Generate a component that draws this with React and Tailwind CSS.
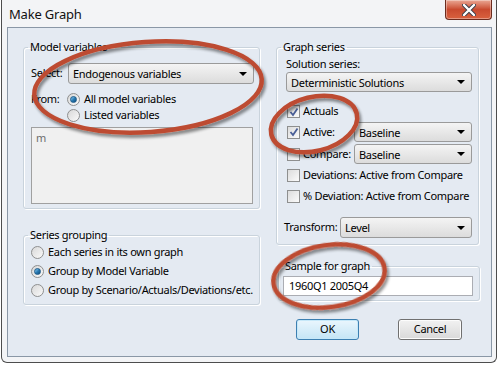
import React from "react";

const font = { fontFamily: '"Noto Sans", "Open Sans", sans-serif' };

const Arrow = () => (
  <svg width="8" height="4" viewBox="0 0 8 4" className="shrink-0">
    <path d="M0 0 L8 0 L4 4 Z" fill="#000" />
  </svg>
);

const Dropdown = ({ value, className }) => (
  <div
    className={
      "flex items-center justify-between h-[20px] rounded-[3px] border border-[#9a9a9a] bg-gradient-to-b from-[#f4f4f4] to-[#dcdcdc] pl-[4px] pr-[6px] leading-none " +
      className
    }
  >
    <span>{value}</span>
    <Arrow />
  </div>
);

const Check = ({ checked }) => (
  <div className="w-[13px] h-[13px] shrink-0 border border-[#8e8f8f] bg-gradient-to-br from-[#dcdcdc] to-[#fbfbfb] flex items-center justify-center">
    {checked && (
      <svg width="10" height="10" viewBox="0 0 10 10">
        <path d="M1.5 5 L4 8 L8.5 1.5" fill="none" stroke="#4a5f97" strokeWidth="1.8" />
      </svg>
    )}
  </div>
);

const Radio = ({ checked }) => (
  <div className="w-[13px] h-[13px] shrink-0 rounded-full border border-[#8e8f8f] bg-gradient-to-br from-[#d8d8d8] to-[#fafafa] flex items-center justify-center">
    {checked && (
      <div className="w-[7px] h-[7px] rounded-full bg-gradient-to-br from-[#8fd3f8] via-[#2a7cb4] to-[#0d4b7c] border border-[#1b5a8a]" />
    )}
  </div>
);

// group box, legend sits on the top border
const Group = ({ title, className, children }) => (
  <fieldset className={"border border-[#c9d3dc] rounded-[3px] p-0 m-0 shadow-[inset_1px_1px_0_#fff,1px_1px_0_#fff] " + className}>
    <legend className="ml-[4px] px-[2px] leading-[16px]">{title}</legend>
    {children}
  </fieldset>
);

export default function App() {
  return (
    <div
      className="relative w-[498px] h-[365px] bg-white overflow-hidden text-black text-[11px] tracking-[-0.3px] whitespace-nowrap"
      style={font}
    >
      <div className="ml-[1px] w-[496px] h-[363px] rounded-b-[6px] border border-t-0 border-[#4d4d4d] bg-[#f3f4f6] flex flex-col">
        {/* title bar */}
        <div className="h-[27px] flex items-start justify-between">
          <div className="pl-[7px] pt-[5px] text-[13px] leading-[18px] tracking-[-0.2px] text-[#111]">Make Graph</div>
          <div className="mr-[4px] w-[47px] h-[20px] rounded-b-[4px] border border-t-0 border-[#6b2c1f] bg-gradient-to-b from-[#e9a794] via-[#c94a2f] to-[#d9613f] flex items-center justify-center shadow-[inset_0_0_0_1px_rgba(255,255,255,0.35)]">
            <svg width="14" height="12" viewBox="0 0 14 12">
              <path d="M2 1 L12 11 M12 1 L2 11" stroke="#3a3f4a" strokeWidth="4.2" strokeLinecap="round" />
              <path d="M2 1 L12 11 M12 1 L2 11" stroke="#fff" strokeWidth="2.4" strokeLinecap="round" />
            </svg>
          </div>
        </div>

        {/* client area */}
        <div className="ml-[5px] w-[485px] h-[330px] border border-[#8a97a6] bg-[#e4eaf2] flex pl-[15px] pt-[11px]">
          {/* left column */}
          <div className="w-[237px] flex flex-col">
            <Group title="Model variables">
              <div className="pl-[7px] pb-[4px]">
                <div className="mt-[8px] flex items-center">
                  <span className="w-[37px]">Select:</span>
                  <Dropdown value="Endogenous variables" className="w-[186px] h-[21px]" />
                </div>
                <div className="mt-[7px] flex">
                  <span className="w-[36px] leading-[16px]">From:</span>
                  <div className="flex flex-col">
                    <div className="h-[16px] flex items-center gap-[4px]">
                      <Radio checked /> All model variables
                    </div>
                    <div className="h-[16px] flex items-center gap-[4px]">
                      <Radio /> Listed variables
                    </div>
                  </div>
                </div>
                <div className="mt-[4px] w-[222px] h-[77px] border border-[#a0a0a0] bg-[#f0f0f0] px-[4px] pt-[2px] text-[#6d6d6d]">
                  m
                </div>
              </div>
            </Group>

            <Group title="Series grouping" className="mt-[18px]">
              <div className="pl-[7px] pb-[4px]">
                <div className="h-[19px] flex items-center gap-[4px]">
                  <Radio /> Each series in its own graph
                </div>
                <div className="h-[19px] flex items-center gap-[4px]">
                  <Radio checked /> Group by Model Variable
                </div>
                <div className="h-[19px] flex items-center gap-[4px]">
                  <Radio /> Group by Scenario/Actuals/Deviations/etc.
                </div>
              </div>
            </Group>
          </div>

          {/* right column */}
          <div className="ml-[16px] w-[203px] flex flex-col">
            <Group title="Graph series">
              <div className="pl-[9px] pb-[6px]">
                <div className="mt-[1px] h-[16px] leading-[16px]">Solution series:</div>
                <Dropdown value="Deterministic Solutions" className="w-[186px]" />
                <div className="mt-[10px] h-[19px] flex items-center gap-[3px] pl-[1px]">
                  <Check checked /> Actuals
                </div>
                <div className="h-[22px] flex items-center pl-[1px]">
                  <div className="w-[67px] flex items-center gap-[3px]">
                    <Check checked /> Active:
                  </div>
                  <Dropdown value="Baseline" className="w-[118px]" />
                </div>
                <div className="h-[22px] flex items-center pl-[1px]">
                  <div className="w-[67px] flex items-center gap-[3px]">
                    <Check /> Compare:
                  </div>
                  <Dropdown value="Baseline" className="w-[118px]" />
                </div>
                <div className="h-[21px] flex items-center gap-[3px] pl-[1px]">
                  <Check /> Deviations: Active from Compare
                </div>
                <div className="h-[21px] flex items-center gap-[3px] pl-[1px]">
                  <Check /> % Deviation: Active from Compare
                </div>
                <div className="mt-[10px] -ml-[2px] flex items-center">
                  <span className="w-[56px]">Transform:</span>
                  <Dropdown value="Level" className="w-[132px] h-[21px]" />
                </div>
              </div>
            </Group>

            <Group title="Sample for graph" className="mt-[13px] ml-[2px] w-[202px]">
              <div className="pl-[4px] pb-[4px]">
                <div className="mt-[2px] w-[190px] h-[20px] border border-[#abadb3] bg-white px-[5px] leading-[18px]">
                  1960Q1 2005Q4
                </div>
              </div>
            </Group>

            <div className="mt-[18px] ml-[20px] flex gap-[39px]">
              <button className="w-[63px] h-[21px] rounded-[3px] border border-[#3c7fb1] bg-gradient-to-b from-[#eaf6fd] to-[#c4e5f6] shadow-[inset_0_0_0_1px_#c6e8f9]">
                OK
              </button>
              <button className="w-[64px] h-[21px] rounded-[3px] border border-[#707070] bg-gradient-to-b from-[#f2f2f2] to-[#d9d9d9] shadow-[inset_0_0_0_1px_#fcfcfc]">
                Cancel
              </button>
            </div>
          </div>
        </div>
      </div>

      {/* annotation ellipses drawn over the dialog */}
      <svg className="absolute inset-0 pointer-events-none" width="498" height="365" viewBox="0 0 498 365">
        <defs>
          <filter id="sh" x="-20%" y="-20%" width="140%" height="140%">
            <feGaussianBlur in="SourceAlpha" stdDeviation="1.6" />
            <feOffset dx="2" dy="2.5" result="b" />
            <feComponentTransfer>
              <feFuncA type="linear" slope="0.45" />
            </feComponentTransfer>
            <feMerge>
              <feMergeNode />
              <feMergeNode in="SourceGraphic" />
            </feMerge>
          </filter>
        </defs>
        <g fill="none" stroke="#bd4b31" strokeWidth="4.5" filter="url(#sh)">
          <ellipse cx="148" cy="87" rx="114" ry="45" transform="rotate(-4 148 87)" />
          <ellipse cx="314" cy="124" rx="44" ry="27" transform="rotate(-14 314 124)" />
          <ellipse cx="329" cy="276" rx="56" ry="31" transform="rotate(-8 329 276)" />
        </g>
      </svg>
    </div>
  );
}
